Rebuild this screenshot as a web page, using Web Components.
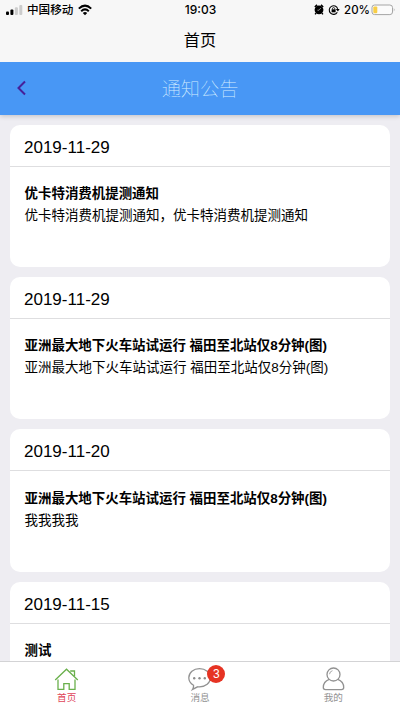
<!DOCTYPE html>
<html lang="zh-CN">
<head>
<meta charset="utf-8">
<meta name="viewport" content="width=device-width, initial-scale=1">
<title>首页</title>
<style>
    html, body {
        margin: 0;
        height: 100%;
        overflow: hidden;
    }
    body {
        font-family: "Liberation Sans", "Noto Sans CJK SC", sans-serif;
        color: #000;
        background: #eeedf2;
    }
</style>
</head>
<body>
<notice-app>
    <status-bar slot="top" carrier="中国移动" time="19:03" battery="20%"></status-bar>
    <nav-title slot="top">首页</nav-title>
    <page-header slot="top">通知公告</page-header>

    <notice-card date="2019-11-29">
        <span slot="title">优卡特消费机提测通知</span>
        优卡特消费机提测通知，优卡特消费机提测通知
    </notice-card>
    <notice-card date="2019-11-29">
        <span slot="title">亚洲最大地下火车站试运行 福田至北站仅8分钟(图)</span>
        亚洲最大地下火车站试运行 福田至北站仅8分钟(图)
    </notice-card>
    <notice-card date="2019-11-20">
        <span slot="title">亚洲最大地下火车站试运行 福田至北站仅8分钟(图)</span>
        我我我我
    </notice-card>
    <notice-card date="2019-11-15">
        <span slot="title">测试</span>
    </notice-card>

    <tab-bar slot="bottom">
        <tab-item icon="home" active>首页</tab-item>
        <tab-item icon="chat" badge="3">消息</tab-item>
        <tab-item icon="user">我的</tab-item>
    </tab-bar>
</notice-app>

<script>
class NoticeApp extends HTMLElement {
    constructor(){
        super();
        this.attachShadow({mode:'open'}).innerHTML = `
            <style>
                :host {
                    display: flex;
                    flex-direction: column;
                    height: 710px;
                    overflow: hidden;
                }
                .list {
                    flex: 1;
                    min-height: 0;
                    overflow: hidden;
                    display: flex;
                    flex-direction: column;
                    gap: 10px;
                    padding: 9.6px 10px 0;
                }
            </style>
            <slot name="top"></slot>
            <div class="list"><slot></slot></div>
            <slot name="bottom"></slot>
        `;
    }
}
customElements.define('notice-app', NoticeApp);

// Carrier, clock and battery
class StatusBar extends HTMLElement {
    constructor(){
        super();
        this.attachShadow({mode:'open'});
    }

    connectedCallback() {
        this.shadowRoot.innerHTML = `
            <style>
                :host {
                    display: grid;
                    grid-template-columns: 1fr auto 1fr;
                    align-items: center;
                    flex: none;
                    height: 20px;
                    box-sizing: border-box;
                    padding: 0 4px 0 6px;
                    background: #f7f7f7;
                    font: 500 12px/20px Inter, "Noto Sans CJK SC", sans-serif;
                }
                div {
                    display: flex;
                    align-items: center;
                }
                svg {
                    display: block;
                    flex: none;
                }
                .carrier {
                    font-size: 11.6px;
                    margin: 0 5px 0 4px;
                }
                .time {
                    margin-right: 1px;
                }
                .right {
                    justify-content: flex-end;
                }
                .battery {
                    margin: 0 1px 0 4px;
                    font-size: 11.5px;
                }
            </style>
            <div>
                <svg width="17" height="12" viewBox="0 0 17 12">
                    <rect x="0" y="7.5" width="3" height="3.5" rx="1"/>
                    <rect x="4.4" y="5.5" width="3" height="5.5" rx="1"/>
                    <rect x="8.9" y="3.3" width="3" height="7.7" rx="1" fill="#ccc"/>
                    <rect x="13.3" y="1" width="3" height="10" rx="1" fill="#ccc"/>
                </svg>
                <span class="carrier">${this.getAttribute('carrier')}</span>
                <svg width="14" height="12" viewBox="0 0 14 12">
                    <g fill="none" stroke="#000" stroke-width="2">
                        <path d="M.8 4.6Q7-1.4 13.2 4.6"/>
                        <path d="M3.2 7.2Q7 3.6 10.8 7.2"/>
                    </g>
                    <path d="M4.8 8.9Q7 7 9.2 8.9L7 11.2z"/>
                </svg>
            </div>
            <span class="time">${this.getAttribute('time')}</span>
            <div class="right">
                <svg width="26" height="12" viewBox="0 0 26 12">
                    <circle cx="5" cy="5.8" r="4.4"/>
                    <path d="M.8 3L3 .9M9.2 3L7 .9M2 9L1.2 10.4M8 9L8.800 10.400" stroke="#000" stroke-width="1.500"/>
                    <path d="M6.800 4L5 6.200H3.400" fill="none" stroke="#ddd" stroke-width=".6"/>
                    <path d="M23.300 8.200A4.300 4.300 0 1 1 23.700 4.900" fill="none" stroke="#000" stroke-width="1.100"/>
                    <path d="M21.800 5H25.600L23.900 7.500z"/>
                    <rect x="17.600" y="5.300" width="4" height="3"/>
                    <path d="M18.400 5.500V4.800a1.200 1.200 0 0 1 2.400 0V5.500" fill="none" stroke="#000" stroke-width=".8"/>
                </svg>
                <span class="battery">${this.getAttribute('battery')}</span>
                <svg width="25" height="12" viewBox="0 0 25 12">
                    <rect x="1" y="1" width="20.500" height="9.600" rx="2.600" fill="#fbfbfb" stroke="#a5a5a5"/>
                    <rect x="2.300" y="2.400" width="4" height="6.800" rx="1.200" fill="#f8ce46"/>
                    <path d="M22.800 4q1.700 1.800 0 3.600z" fill="#a5a5a5"/>
                </svg>
            </div>
        `;
    }
}
customElements.define('status-bar', StatusBar);

class NavTitle extends HTMLElement {
    constructor(){
        super();
        this.attachShadow({mode:'open'}).innerHTML = `
            <style>
                :host {
                    display: block;
                    flex: none;
                    height: 42px;
                    background: #f7f7f7;
                    text-align: center;
                    font-size: 16.2px;
                    line-height: 41px;
                }
            </style>
            <slot></slot>
        `;
    }
}
customElements.define('nav-title', NavTitle);

class PageHeader extends HTMLElement {
    constructor(){
        super();
        this.attachShadow({mode:'open'}).innerHTML = `
            <style>
                :host {
                    display: grid;
                    grid-template-columns: 1fr auto 1fr;
                    align-items: center;
                    flex: none;
                    height: 53px;
                    box-sizing: border-box;
                    padding: 0 16px;
                    background: #4897f5;
                    box-shadow: 0 1px 5px rgba(0, 0, 0, .2);
                    /* shadow only below the bar */
                    clip-path: inset(0 0 -10px 0);
                }
                svg {
                    display: block;
                    margin-bottom: 2px;
                }
                .title {
                    font: 100 19.2px/53px "Noto Sans CJK SC", sans-serif;
                    color: #d4edff;
                }
            </style>
            <svg width="12" height="16" viewBox="0 0 12 16">
                <path d="M9 1.500L2.500 8L9 14.500" fill="none" stroke="#46209a" stroke-width="2"/>
            </svg>
            <span class="title"><slot></slot></span>
        `;
    }
}
customElements.define('page-header', PageHeader);

class NoticeCard extends HTMLElement {
    constructor(){
        super();
        this.attachShadow({mode:'open'});
    }

    connectedCallback() {
        this.shadowRoot.innerHTML = `
            <style>
                :host {
                    display: block;
                    flex: none;
                    height: 142.35px;
                    border-radius: 10px;
                    background: #fff;
                    font-size: 13.5px;
                    line-height: 22px;
                }
                .date {
                    height: 41px;
                    padding: 0 14px;
                    border-bottom: 1px solid #dedee0;
                    font-size: 17px;
                    line-height: 45px;
                }
                .content {
                    padding: 16.300px 14.600px;
                }
                .title {
                    font-size: 13.45px;
                    font-weight: bold;
                }
            </style>
            <div class="date">${this.getAttribute('date')}</div>
            <div class="content">
                <div class="title"><slot name="title"></slot></div>
                <div><slot></slot></div>
            </div>
        `;
    }
}
customElements.define('notice-card', NoticeCard);

class TabBar extends HTMLElement {
    constructor(){
        super();
        this.attachShadow({mode:'open'}).innerHTML = `
            <style>
                :host {
                    display: grid;
                    grid-template-columns: repeat(3, 1fr);
                    flex: none;
                    height: 49px;
                    box-sizing: border-box;
                    border-top: 1px solid #d3d3d5;
                    background: #fff;
                }
            </style>
            <slot></slot>
        `;
    }
}
customElements.define('tab-bar', TabBar);

const ICONS = {
    home: `
        <path d="M1.200 13L12.500 2.200L23.800 13" stroke-width="1.300"/>
        <path d="M4 12.600V22.400H9.800V16.600H15.200V22.400H21V12.600M16.200 4H20.500V9" stroke-width="1.300"/>`,
    chat: `
        <path d="M6.500 18.200C3.500 16.500 1.800 13.900 1.800 10.800C1.800 5.600 6.500 1.600 12.500 1.600S23.400 5.600 23.400 10.800S18.500 19.900 12.500 19.900C11.800 19.900 11.200 19.900 10.600 19.800L5.600 22.400Q6.800 20.500 6.500 18.200z" stroke-width="1.300"/>
        <g fill="#8c8c8c" stroke="none"><circle cx="7.200" cy="11.200" r="1.200"/><circle cx="12.500" cy="11.200" r="1.200"/><circle cx="17.800" cy="11.200" r="1.200"/></g>`,
    user: `
        <circle cx="12.500" cy="7.500" r="6.500" stroke-width="1.300"/>
        <path d="M8.500 7.200Q8.800 4.300 11.500 3.700" stroke-width=".8"/>
        <path d="M8.200 12.400C4.400 13.800 2.300 17 2.300 20.500Q2.300 22.600 4.500 22.600H20.500Q22.700 22.600 22.700 20.500C22.700 17 20.600 13.800 16.800 12.400" stroke-width="1.300"/>`
};

class TabItem extends HTMLElement {
    constructor(){
        super();
        this.attachShadow({mode:'open'});
    }

    connectedCallback() {
        let badge = this.getAttribute('badge');
        this.shadowRoot.innerHTML = `
            <style>
                :host {
                    display: flex;
                    flex-direction: column;
                    align-items: center;
                    padding-top: 5px;
                    color: #929292;
                    font-size: 9.600px;
                    line-height: 14px;
                }
                :host([active]) {
                    color: #e0465a;
                }
                .icon {
                    position: relative;
                    height: 24px;
                    color: #929292;
                }
                :host([active]) .icon {
                    color: #6ab04c;
                }
                svg {
                    display: block;
                }
                .badge {
                    position: absolute;
                    left: 20px;
                    top: -2px;
                    min-width: 17.500px;
                    height: 17.500px;
                    border-radius: 9px;
                    background: #e63323;
                    color: #fff;
                    font-size: 12px;
                    line-height: 18px;
                    text-align: center;
                }
            </style>
            <div class="icon">
                <svg width="25" height="24" viewBox="0 0 25 24" fill="none" stroke="currentColor">${ICONS[this.getAttribute('icon')]}</svg>
                ${badge != null ? `<span class="badge">${badge}</span>` : ''}
            </div>
            <slot></slot>
        `;
    }
}
customElements.define('tab-item', TabItem);
</script>
</body>
</html>
